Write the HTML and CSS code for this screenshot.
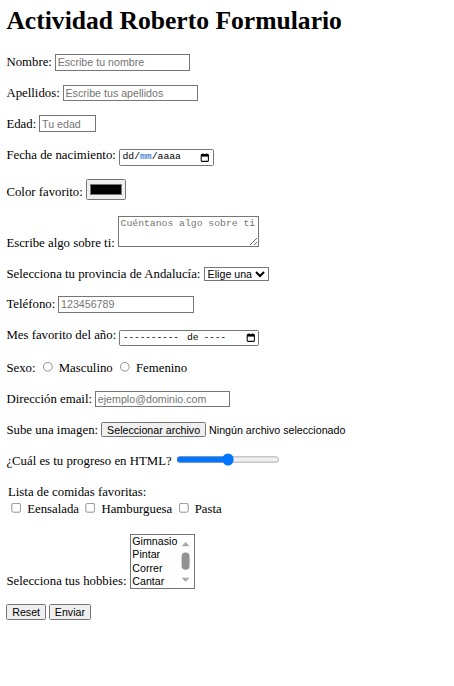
FILE: index.html
```html
<!DOCTYPE html>
<html lang="es">
<head>
<meta charset="utf-8">
<title>Actividad Roberto Formulario</title>
<link rel="stylesheet" href="styles.css">
</head>
<body class="page">
<h1 class="title">Actividad Roberto Formulario</h1>
<form class="form">
  <p class="row"><label>Nombre:</label> <input type="text" class="txt" placeholder="Escribe tu nombre"></p>
  <p class="row"><label>Apellidos:</label> <input type="text" class="txt" placeholder="Escribe tus apellidos"></p>
  <p class="row"><label>Edad:</label> <input type="text" class="txt txt-short" placeholder="Tu edad"></p>
  <p class="row"><label>Fecha de nacimiento:</label> <span class="fake-date"><span class="seg">dd</span>/<span class="seg seg-active">mm</span>/<span class="seg">aaaa</span><svg class="cal" viewBox="0 0 12 12" width="12" height="12"><rect x="1.5" y="2" width="9" height="8.5" rx="1" fill="none" stroke="#000" stroke-width="1.3"/><rect x="1.5" y="2" width="9" height="2.5" fill="#000"/><rect x="3" y="0.5" width="1.4" height="2" fill="#000"/><rect x="7.6" y="0.5" width="1.4" height="2" fill="#000"/></svg></span></p>
  <p class="row row-color"><label>Color favorito:</label> <input type="color" class="color" value="#000000"></p>
  <p class="row"><label>Escribe algo sobre ti:</label> <textarea class="area" cols="20" rows="2" placeholder="Cuéntanos algo sobre ti"></textarea></p>
  <p class="row"><label>Selecciona tu provincia de Andalucía:</label> <select class="sel"><option>Elige una</option><option>Almería</option><option>Cádiz</option><option>Córdoba</option><option>Granada</option><option>Huelva</option><option>Jaén</option><option>Málaga</option><option>Sevilla</option></select></p>
  <p class="row"><label>Teléfono:</label> <input type="text" class="txt" placeholder="123456789"></p>
  <p class="row"><label>Mes favorito del año:</label> <span class="fake-date fake-month"><span class="seg">----------</span><span class="de">de</span><span class="seg">----</span><svg class="cal" viewBox="0 0 12 12" width="12" height="12"><rect x="1.5" y="2" width="9" height="8.5" rx="1" fill="none" stroke="#000" stroke-width="1.3"/><rect x="1.5" y="2" width="9" height="2.5" fill="#000"/><rect x="3" y="0.5" width="1.4" height="2" fill="#000"/><rect x="7.6" y="0.5" width="1.4" height="2" fill="#000"/></svg></span></p>
  <p class="row"><label>Sexo:</label> <input type="radio" name="sexo" id="m"> <label for="m">Masculino</label> <input type="radio" name="sexo" id="f"> <label for="f">Femenino</label></p>
  <p class="row"><label>Dirección email:</label> <input type="text" class="txt" placeholder="ejemplo@dominio.com"></p>
  <p class="row"><label>Sube una imagen:</label> <span class="file"><button type="button" class="btn">Seleccionar archivo</button> <span class="file-name">Ningún archivo seleccionado</span></span></p>
  <p class="row"><label>¿Cuál es tu progreso en HTML?</label> <input type="range" class="range" min="0" max="100" value="50"></p>
  <p class="row group">Lista de comidas favoritas:<br><input type="checkbox" id="c1"> <label for="c1">Eensalada</label> <input type="checkbox" id="c2"> <label for="c2">Hamburguesa</label> <input type="checkbox" id="c3"> <label for="c3">Pasta</label></p>
  <p class="row"><label>Selecciona tus hobbies:</label> <span class="listbox" role="listbox" aria-multiselectable="true"><svg class="sb" width="17" height="67" viewBox="0 0 17 67"><polygon points="2,14 12,14 7,8.6" fill="#a6a6a6"/><rect x="2" y="22" width="10" height="21.5" rx="5" fill="#929292"/><polygon points="2,53.5 12,53.5 7,58.3" fill="#a6a6a6"/></svg><span class="opt" role="option">Gimnasio</span><span class="opt" role="option">Pintar</span><span class="opt" role="option">Correr</span><span class="opt" role="option">Cantar</span></span></p>
  <p class="row"><input type="reset" class="btn" value="Reset"> <input type="submit" class="btn" value="Enviar"></p>
</form>
</body>
</html>
```
FILE: styles.css
```css
html { background: #fff; }
.page {
  zoom: 0.8;
  margin: 8px;
  font-family: "Liberation Serif", "Times New Roman", serif;
  font-size: 16px;
  color: #000;
}
.title {
  margin: 0 0 21.44px;
  font-size: 32px;
  font-weight: bold;
  line-height: 37px;
}
.form { margin: 0; }
.row { margin: 16px 0; line-height: 22.5px; }
.txt, .sel, .listbox, .btn, .file-name {
  font-family: "Liberation Sans", Arial, sans-serif;
  font-size: 13.333px;
}
.txt {
  width: 169px;
  box-sizing: border-box;
  border: 1px solid #767676;
  padding: 1px 2px;
  height: 21px;
}
.txt::placeholder { color: #757575; }
.txt-short { width: 71px; }
.fake-date {
  display: inline-flex;
  align-items: center;
  box-sizing: border-box;
  height: 21px;
  width: 119px;
  border: 1px solid #767676;
  border-radius: 2px;
  padding: 0 4px 0 3px;
  color: #000;
  font-family: "Liberation Mono", "DejaVu Sans Mono", monospace;
  font-size: 12.2px;
  line-height: 15px;
  white-space: pre;
  vertical-align: -1px;
}
.fake-month { width: 175px; }
.fake-month .seg { letter-spacing: -0.3px; }
.de { margin: 0 6px 0 10px; }
.seg-active { color: #0a65cc; }
.cal { margin-left: auto; flex: none; }
.color { width: 50px; height: 27px; }
.row-color { line-height: 27px; }
.area {
  font-family: "Liberation Mono", "DejaVu Sans Mono", monospace;
  font-size: 12.2px;
  width: 176px;
  height: 39px;
  box-sizing: border-box;
}
.area::placeholder { color: #757575; }
.sel { width: 82px; }
.listbox {
  display: inline-block;
  box-sizing: border-box;
  width: 81px;
  height: 69px;
  border: 1px solid #767676;
  background: #fff;
  line-height: 15.75px;
  color: #000;
}
.sb { float: right; display: block; }
.opt { display: block; padding: 0 2px 1px; white-space: nowrap; }
.btn { padding: 1px 6px; }
.file-name { color: #000; }
.range { width: 129px; margin: 2px; }
.group { padding-left: 2px; line-height: 21px; margin-bottom: 20px; }
```
